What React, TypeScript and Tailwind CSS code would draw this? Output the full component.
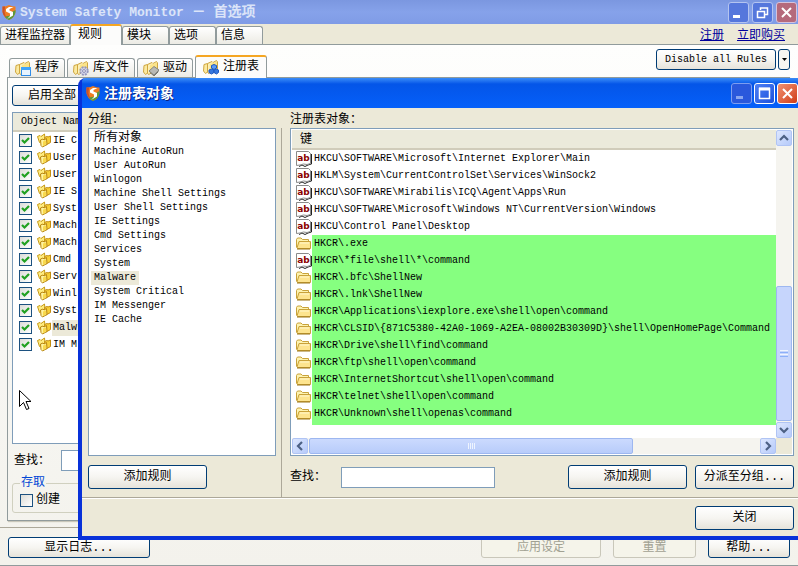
import { useState } from "react";
import type { ReactNode } from "react";
import clsx from "clsx";

const MAIN_TABS = ["进程监控器", "规则", "模块", "选项", "信息"];

type Badge = "window" | "gear" | "driver" | "registry";

const RULE_TABS: { label: string; badge: Badge }[] = [
  { label: "程序", badge: "window" },
  { label: "库文件", badge: "gear" },
  { label: "驱动", badge: "driver" },
  { label: "注册表", badge: "registry" },
];

const OBJECTS = [
  "IE C",
  "User",
  "User",
  "IE S",
  "Syst",
  "Mach",
  "Mach",
  "Cmd",
  "Serv",
  "Winl",
  "Syst",
  "Malw",
  "IM M",
];

const GROUPS = [
  "所有对象",
  "Machine AutoRun",
  "User AutoRun",
  "Winlogon",
  "Machine Shell Settings",
  "User Shell Settings",
  "IE Settings",
  "Cmd Settings",
  "Services",
  "System",
  "Malware",
  "System Critical",
  "IM Messenger",
  "IE Cache",
];

interface RegKey {
  path: string;
  kind: "value" | "folder";
  marked?: boolean;
}

const KEYS: RegKey[] = [
  { path: "HKCU\\SOFTWARE\\Microsoft\\Internet Explorer\\Main", kind: "value" },
  { path: "HKLM\\System\\CurrentControlSet\\Services\\WinSock2", kind: "value" },
  { path: "HKCU\\SOFTWARE\\Mirabilis\\ICQ\\Agent\\Apps\\Run", kind: "value" },
  { path: "HKCU\\SOFTWARE\\Microsoft\\Windows NT\\CurrentVersion\\Windows", kind: "value" },
  { path: "HKCU\\Control Panel\\Desktop", kind: "value" },
  { path: "HKCR\\.exe", kind: "folder", marked: true },
  { path: "HKCR\\*file\\shell\\*\\command", kind: "value", marked: true },
  { path: "HKCR\\.bfc\\ShellNew", kind: "folder", marked: true },
  { path: "HKCR\\.lnk\\ShellNew", kind: "folder", marked: true },
  { path: "HKCR\\Applications\\iexplore.exe\\shell\\open\\command", kind: "folder", marked: true },
  {
    path: "HKCR\\CLSID\\{871C5380-42A0-1069-A2EA-08002B30309D}\\shell\\OpenHomePage\\Command",
    kind: "folder",
    marked: true,
  },
  { path: "HKCR\\Drive\\shell\\find\\command", kind: "folder", marked: true },
  { path: "HKCR\\ftp\\shell\\open\\command", kind: "folder", marked: true },
  { path: "HKCR\\InternetShortcut\\shell\\open\\command", kind: "folder", marked: true },
  { path: "HKCR\\telnet\\shell\\open\\command", kind: "folder", marked: true },
  { path: "HKCR\\Unknown\\shell\\openas\\command", kind: "folder", marked: true },
];

function Shield() {
  return (
    <svg width="14" height="17" viewBox="0 0 14 17" className="shrink-0">
      <path d="M0.500 2.500 Q4 2.500 7 1 Q10 2.500 13.500 2.500 V8 Q13 13 7 16 Q1 13 0.500 8Z" fill="#ef7d22" />
      <path d="M13.500 6 V8 Q13 13 7 16 Q4 14.500 2.500 12.500 L9 11.500 L10 8Z" fill="#5c9a3c" />
      <path d="M0.500 2.500 L3 2.500 L2.500 8 L4 13.500 Q1 11.500 0.500 8Z" fill="#c9502a" />
      <path d="M11.500 3 H7 L4 5 V7.500 L8 9.500 V12 L5 15 L11 11.500 V8 L7.500 6.500 V5Z" fill="#fff" />
    </svg>
  );
}

function Folders({ badge }: { badge: Badge }) {
  return (
    <svg width="16" height="16" viewBox="0 0 16 16" className="shrink-0">
      <path d="M1 5.500 L4.500 4.500 V13 L2.500 14.500 L0.500 12Z" fill="#fbeaa0" stroke="#cfa640" />
      <path d="M4.500 4.500 L9 2.500 L10 3.500 L13.500 1.500 L14.500 3 V10 L5.500 14.500 L4.500 13Z" fill="#fdf0b8" stroke="#cfa640" />
      <path d="M7 5 L14 2.500 V10 L6 13.500Z" fill="#fbe388" />
      {badge === "window" && (
        <>
          <rect x="6.500" y="7.500" width="9" height="8" fill="#e8f4ff" stroke="#2f8ce8" />
          <rect x="6" y="7" width="10" height="3" fill="#3fa4fb" />
        </>
      )}
      {badge === "gear" && (
        <>
          <circle cx="11" cy="11" r="3.800" fill="#d4d6ea" stroke="#9496bc" strokeDasharray="2 1" strokeWidth="1.800" />
          <circle cx="11" cy="11" r="1.400" fill="#fff" stroke="#8688b0" />
        </>
      )}
      {badge === "driver" && (
        <>
          <path d="M6 11 L11 6.500 L16 10 L11 15Z" fill="#b9b9b4" stroke="#85857f" />
          <path d="M7 12.500 L11 16 L15.500 11.500" fill="none" stroke="#77776f" />
        </>
      )}
      {badge === "registry" && (
        <>
          <path d="M11 5.500 L13.500 6.500 V9 L11 10.500 L8.500 9 V6.500Z" fill="#5b9af5" stroke="#1d57c0" />
          <path d="M8.500 10 L11 11 V13.500 L8.500 15 L6 13.500 V11Z" fill="#3577de" stroke="#1d57c0" />
          <path d="M13.500 10 L15.500 11 V13.500 L13.500 15 L11 13.500 V11Z" fill="#3577de" stroke="#1d57c0" />
        </>
      )}
    </svg>
  );
}

function ObjectIcon() {
  return (
    <svg width="15" height="15" viewBox="0 0 15 15" className="shrink-0">
      <path d="M0.500 3.500 L3 2.500 L4 3.500 L7.500 1 L8 6.500 L2.500 9.500Z" fill="#ffec80" stroke="#c79a18" />
      <path d="M7.500 4.500 L10 3.500 L11 4 L13.500 3 V9.500 L9 12Z" fill="#f7cf38" stroke="#c28d10" />
      <path d="M3.500 7 L6 6 L7 7 L9.500 5.500 L10 11.500 L5.500 14 L4 12.500Z" fill="#fff3a0" stroke="#b9860e" />
      <path d="M6 8.500 L9 7.500 V11.500 L6 13Z" fill="#f9d94c" />
    </svg>
  );
}

function KeyIcon({ kind }: { kind: RegKey["kind"] }) {
  if (kind === "folder") {
    return (
      <svg width="15" height="13" viewBox="0 0 15 13" className="shrink-0">
        <path d="M0.500 10.500 V2.500 L1.500 1 H5 L6.500 2.500 H12.500 V4.500" fill="#fdf3b0" stroke="#c9a23a" />
        <path d="M1 11 L3 4.500 H14.500 V11.500 H1.500Z" fill="#fde48e" stroke="#c9a23a" />
        <path d="M4 6 H13" stroke="#fff8cf" />
        <path d="M1 12 H14" stroke="#9a7414" />
      </svg>
    );
  }
  return (
    <svg width="16" height="16" viewBox="0 0 16 16" className="shrink-0">
      <path d="M3 15.500 L6 14 L9 15.500 L12 14 L15.500 13 V3" fill="none" stroke="#222" />
      <path d="M0.500 0.500 H12.500 L14.500 2.500 V12.500 L11 13.500 L7.500 13 L4 14 L0.500 14.500Z" fill="#fff" stroke="#8a8a8a" />
      <text x="7.500" y="10" textAnchor="middle" fontFamily="DejaVu Sans, sans-serif" fontWeight="700" fontSize="9" fill="#8b0000">
        ab
      </text>
    </svg>
  );
}

type CaptionKind = "minimize" | "maximize" | "restore" | "close";

function CaptionButton({ kind, faded }: { kind: CaptionKind; faded?: boolean }) {
  const close = kind === "close";
  return (
    <button
      aria-label={kind}
      className={clsx(
        "flex size-[21px] shrink-0 items-center justify-center rounded-[3px] border",
        faded && close && "border-[#d5c3dc] bg-[#b56a7c]",
        faded && !close && "border-[#b4c4f0] bg-[#5577dc]",
        !faded && close && "border-white bg-linear-to-br from-[#f09070] to-[#cf3a10]",
        !faded && kind === "minimize" && "border-[#7d9df0] bg-[#2a58dc]",
        !faded && kind === "maximize" && "border-white bg-linear-to-br from-[#4f80f4] to-[#1c50dc]",
      )}
    >
      <svg width="15" height="15" viewBox="0 0 15 15" fill="none" stroke="#fff" strokeWidth="2">
        {kind === "minimize" && <path d="M2 11.500 H9" stroke={faded ? "#fff" : "#8aa6f0"} strokeWidth="3" />}
        {kind === "maximize" && (
          <>
            <rect x="2.500" y="2.500" width="10" height="10" strokeWidth="1.500" />
            <path d="M2 3 H13" strokeWidth="3" />
          </>
        )}
        {kind === "restore" && (
          <>
            <path d="M5.500 5 V3 H12.500 V9.500 H10" strokeWidth="1.500" />
            <rect x="2.500" y="6.500" width="7" height="6" strokeWidth="1.500" />
          </>
        )}
        {close && <path d="M3 3 L12 12 M12 3 L3 12" />}
      </svg>
    </button>
  );
}

function Check({ label, hidden, checked }: { label: string; hidden?: boolean; checked?: boolean }) {
  const [on, setOn] = useState(!!checked);
  return (
    <label className="flex items-center gap-[3px]">
      <span className="relative flex">
        <input
          type="checkbox"
          aria-label={label}
          checked={on}
          onChange={(e) => setOn(e.target.checked)}
          className="size-[13px] appearance-none border border-[#1c5180] bg-linear-to-br from-[#dcdcd7] to-white"
        />
        {on && (
          <svg width="13" height="13" viewBox="0 0 13 13" className="pointer-events-none absolute inset-0">
            <path d="M3 6 L5.500 8.500 L10 4" fill="none" stroke="#21a121" strokeWidth="2.200" />
          </svg>
        )}
      </span>
      {!hidden && label}
    </label>
  );
}

function XpButton({ children, className, disabled }: { children: ReactNode; className: string; disabled?: boolean }) {
  return (
    <button
      disabled={disabled}
      className={clsx(
        "shrink-0 whitespace-nowrap rounded-[3px] border text-center",
        disabled
          ? "border-[#c9c7ba] bg-[#f5f4ea] text-[#a1a192]"
          : "border-[#003c74] bg-linear-to-b from-white via-[#f6f5f1] to-[#e6e3da]",
        className,
      )}
    >
      {children}
    </button>
  );
}

function ScrollArrow({ label, d }: { label: string; d: string }) {
  return (
    <button
      aria-label={label}
      className="flex size-4 shrink-0 items-center justify-center rounded-[2px] border border-[#b0c4f4] bg-linear-to-br from-[#dde7fe] to-[#b6cafa]"
    >
      <svg width="10" height="10" viewBox="0 0 10 10" fill="none" stroke="#4d6185" strokeWidth="2.200">
        <path d={d} />
      </svg>
    </button>
  );
}

function RegistryDialog() {
  const [group, setGroup] = useState("Malware");

  return (
    <section
      role="dialog"
      aria-labelledby="dialog-title"
      className="absolute left-[78px] right-0 top-[78px] flex flex-col rounded-tl-lg border-b-4 border-l-4 border-[#0831d9] bg-[#ece9d8]"
    >
      <header className="flex h-[30px] items-center gap-[2px] rounded-tl-[4px] bg-linear-to-b from-[#3a8cf8] via-[#0455e8] via-20% to-[#0560fa] pl-1 text-white">
        <Shield />
        <h2 id="dialog-title" className="ml-[2px] flex-1 pt-px text-[14px] font-bold leading-5 [text-shadow:1px_1px_0_#0a1f80]">
          注册表对象
        </h2>
        <CaptionButton kind="minimize" />
        <CaptionButton kind="maximize" />
        <CaptionButton kind="close" />
      </header>

      <div className="flex border-b border-[#aca899]">
        <div className="flex w-[194px] shrink-0 flex-col pb-2 pl-[6px] pt-1">
          <h3 className="h-4 leading-4">分组：</h3>
          <ul className="flex-1 border border-[#7f9db9] bg-white pl-[2px] pt-[2px]">
            {GROUPS.map((g) => (
              <li key={g} className="flex h-[14px]">
                <button
                  onClick={() => setGroup(g)}
                  className={clsx(
                    "whitespace-nowrap px-[3px] leading-[14px]",
                    g === "所有对象" ? "text-[12px]" : "text-[10px]",
                    g === group && "bg-[#ece9d8]",
                  )}
                >
                  {g}
                </button>
              </li>
            ))}
          </ul>
          <XpButton className="mt-[9px] h-6 w-[119px] self-start">添加规则</XpButton>
        </div>

        <div className="ml-[5px] mt-5 w-px bg-[#aca899]" />

        <div className="flex min-w-0 flex-1 flex-col pb-2 pl-2 pr-1 pt-1">
          <h3 className="h-4 leading-4">注册表对象：</h3>
          <div className="flex flex-col border border-[#7f9db9] bg-white p-px">
            <div className="flex">
              <div className="min-w-0 flex-1 overflow-hidden pb-[13px]">
                <table className="w-full border-collapse">
                  <thead>
                    <tr>
                      <th
                        colSpan={2}
                        className="h-[19px] border-b-2 border-[#d0ccba] bg-[#ebeadb] pl-2 pt-px text-left font-normal leading-4"
                      >
                        键
                      </th>
                    </tr>
                  </thead>
                  <tbody>
                    {KEYS.map((k, i) => (
                      <tr key={k.path} className="align-top text-[10px] leading-[17px]">
                        <td className="w-[19px] pl-1">
                          <span className="flex h-[17px] items-center">
                            <KeyIcon kind={k.kind} />
                          </span>
                        </td>
                        <td
                          className={clsx(
                            "whitespace-nowrap pl-[2px]",
                            k.marked && "bg-[#86ff80]",
                            i === KEYS.length - 1 && "pb-[3px]",
                          )}
                        >
                          {k.path}
                        </td>
                      </tr>
                    ))}
                  </tbody>
                </table>
              </div>
              <div className="flex w-4 flex-col bg-[#f5f4ef]">
                <ScrollArrow label="向上滚动" d="M1 7 L5 3 L9 7" />
                <div className="flex flex-1 flex-col justify-end py-px">
                  <div className="flex h-[135px] flex-col items-center justify-center gap-px rounded-[2px] border border-[#9db7f0] bg-[#c6d5fc]">
                    <span className="h-px w-2 bg-[#eef4fe]" />
                    <span className="h-px w-2 bg-[#8cb0f8]" />
                    <span className="h-px w-2 bg-[#eef4fe]" />
                    <span className="h-px w-2 bg-[#8cb0f8]" />
                  </div>
                </div>
                <ScrollArrow label="向下滚动" d="M1 3 L5 7 L9 3" />
              </div>
            </div>
            <div className="flex h-4 bg-[#f5f4ef]">
              <ScrollArrow label="向左滚动" d="M7 1 L3 5 L7 9" />
              <div className="flex flex-1 px-px">
                <div className="flex w-[72%] items-center justify-center gap-px rounded-[2px] border border-[#9db7f0] bg-linear-to-b from-[#cbdafe] to-[#b8ccfa]">
                  <span className="h-[6px] w-px bg-[#eef4fe]" />
                  <span className="h-[6px] w-px bg-[#eef4fe]" />
                  <span className="h-[6px] w-px bg-[#eef4fe]" />
                  <span className="h-[6px] w-px bg-[#eef4fe]" />
                </div>
              </div>
              <ScrollArrow label="向右滚动" d="M3 1 L7 5 L3 9" />
              <div className="w-4 bg-[#ece9d8]" />
            </div>
          </div>
          <div className="mt-[9px] flex h-6 items-center">
            <label htmlFor="key-search" className="w-[51px]">
              查找：
            </label>
            <input id="key-search" className="h-[21px] w-[154px] border border-[#7f9db9] bg-white px-1" />
            <div className="ml-auto flex gap-2">
              <XpButton className="h-6 w-[119px]">添加规则</XpButton>
              <XpButton className="h-6 w-[99px]">分派至分组...</XpButton>
            </div>
          </div>
        </div>
      </div>

      <footer className="flex justify-end border-t border-white pb-[6px] pr-1 pt-[7px]">
        <XpButton className="h-6 w-[99px]">关闭</XpButton>
      </footer>
    </section>
  );
}

export default function App() {
  const [mainTab, setMainTab] = useState("规则");
  const [ruleTab, setRuleTab] = useState("注册表");

  return (
    <div className="relative flex min-h-screen flex-col overflow-hidden bg-[#ece9d8] font-['Liberation_Mono','Noto_Sans_CJK_SC',monospace] text-[12px] leading-4 text-black">
      <header className="flex h-6 items-center gap-[3px] bg-linear-to-b from-[#7b97e0] via-[#86a2ea] to-[#7f9be6] pl-[2px] pr-px">
        <Shield />
        <h1 className="ml-px flex-1 whitespace-nowrap text-[13px] font-bold leading-5 text-[#dbe4f8]">
          System Safety Monitor <span className="text-[14px]">－</span> <span className="text-[14px]">首选项</span>
        </h1>
        <CaptionButton kind="minimize" faded />
        <CaptionButton kind="restore" faded />
        <CaptionButton kind="close" faded />
      </header>

      <div className="flex h-5 items-end">
        <nav className="flex h-5 items-end">
          {MAIN_TABS.map((t) => (
            <button
              key={t}
              onClick={() => setMainTab(t)}
              className={clsx(
                "relative whitespace-nowrap rounded-t-[3px] border border-b-0 text-left",
                t === mainTab
                  ? "z-10 -mb-px h-[21px] w-[52px] border-[#919b9c] border-t-2 border-t-[#f5a623] bg-[#fcfcfb] pb-[2px] pl-[7px]"
                  : "h-[18px] border-[#919b9c] bg-linear-to-b from-white to-[#ecebe4] pl-1 pt-px",
                t !== mainTab && (t === "进程监控器" ? "w-[70px]" : "w-[47px]"),
              )}
            >
              {t}
            </button>
          ))}
        </nav>
        <div className="ml-auto flex gap-[13px] pr-[13px]">
          <a href="#register" className="text-[#00009c] underline">
            注册
          </a>
          <a href="#buy" className="text-[#00009c] underline">
            立即购买
          </a>
        </div>
      </div>

      <main className="flex flex-1 flex-col border-b border-t border-[#919b9c] bg-linear-to-b from-[#fefefd] to-[#f3f2ec]">
        <div className="flex h-8 items-end pl-[9px] pr-2">
          <nav className="flex items-end gap-[2px]">
            {RULE_TABS.map((t) => (
              <button
                key={t.label}
                onClick={() => setRuleTab(t.label)}
                className={clsx(
                  "relative flex items-center gap-1 whitespace-nowrap rounded-t-[3px] border border-b-0 border-[#919b9c]",
                  t.label === ruleTab
                    ? "z-10 -mb-px h-[23px] border-t-2 border-t-[#f5a623] bg-[#fcfcfb] px-[7px] pb-[2px]"
                    : "h-[19px] bg-linear-to-b from-white to-[#ecebe4] px-[5px]",
                )}
              >
                <Folders badge={t.badge} />
                {t.label}
              </button>
            ))}
          </nav>
          <div className="ml-auto mt-1 flex gap-[2px] self-start">
            <XpButton className="h-[21px] w-[120px] text-[10px]">Disable all Rules</XpButton>
            <button
              aria-label="更多"
              className="flex h-[21px] w-3 items-center justify-center rounded-[3px] border border-[#003c74] bg-[#f6f5f1]"
            >
              <svg width="5" height="3" viewBox="0 0 5 3">
                <path d="M0 0 H5 L2.500 3Z" fill="#000" />
              </svg>
            </button>
          </div>
        </div>

        <div className="ml-[7px] mr-2 flex flex-1 flex-col border border-[#919b9c] px-1 py-[7px] shadow-[1px_1px_1px_#c9c7ba]">
          <XpButton className="h-[21px] w-[80px]">启用全部</XpButton>
          <div className="mt-[6px] flex-1 border border-[#7f9db9] bg-white">
            <table className="w-full border-collapse">
              <thead>
                <tr>
                  <th className="h-[18px] border-b-2 border-[#d0ccba] bg-[#ebeadb] pl-2 pt-px text-left text-[10px] font-normal leading-4">
                    Object Name
                  </th>
                </tr>
              </thead>
              <tbody>
                {OBJECTS.map((o, i) => (
                  <tr key={i} className="text-[10px] leading-[17px]">
                    <td className="pl-[6px]">
                      <div className="flex h-[17px] items-center">
                        <Check label={o} hidden checked />
                        <span className="ml-[5px] flex">
                          <ObjectIcon />
                        </span>
                        <span className={clsx("whitespace-nowrap px-px leading-4", o === "Malw" && "bg-[#ece9d8]")}>
                          {o}
                        </span>
                      </div>
                    </td>
                  </tr>
                ))}
              </tbody>
            </table>
          </div>
          <div className="mt-[6px] flex h-[21px] items-center">
            <label htmlFor="object-search" className="w-[49px] pl-[2px]">
              查找：
            </label>
            <input id="object-search" className="h-[21px] w-[154px] border border-[#7f9db9] bg-white px-1" />
          </div>
          <fieldset className="mt-1 rounded-[3px] border border-[#d0d0bf] pb-1 pl-[7px] pt-px">
            <legend className="px-px leading-4 text-[#0046d5]">存取</legend>
            <Check label="创建" />
          </fieldset>
        </div>

        <footer className="mt-[6px] flex border-t border-[#aca899] px-2 pb-[7px] pt-[9px]">
          <XpButton className="h-[21px] w-[142px]">显示日志...</XpButton>
          <div className="ml-auto flex gap-3">
            <XpButton disabled className="h-[21px] w-[120px]">
              应用设定
            </XpButton>
            <XpButton disabled className="h-[21px] w-[83px]">
              重置
            </XpButton>
            <XpButton className="h-[21px] w-[82px]">帮助...</XpButton>
          </div>
        </footer>
      </main>

      <RegistryDialog />

      <svg width="13" height="21" viewBox="0 0 13 21" className="pointer-events-none absolute left-[19px] top-[390px]">
        <path
          d="M0.500 0.500 V16.500 L4.500 12.500 L7.500 19.500 L10 18.500 L7 11.500 H12Z"
          fill="#fff"
          stroke="#000"
        />
      </svg>
    </div>
  );
}
